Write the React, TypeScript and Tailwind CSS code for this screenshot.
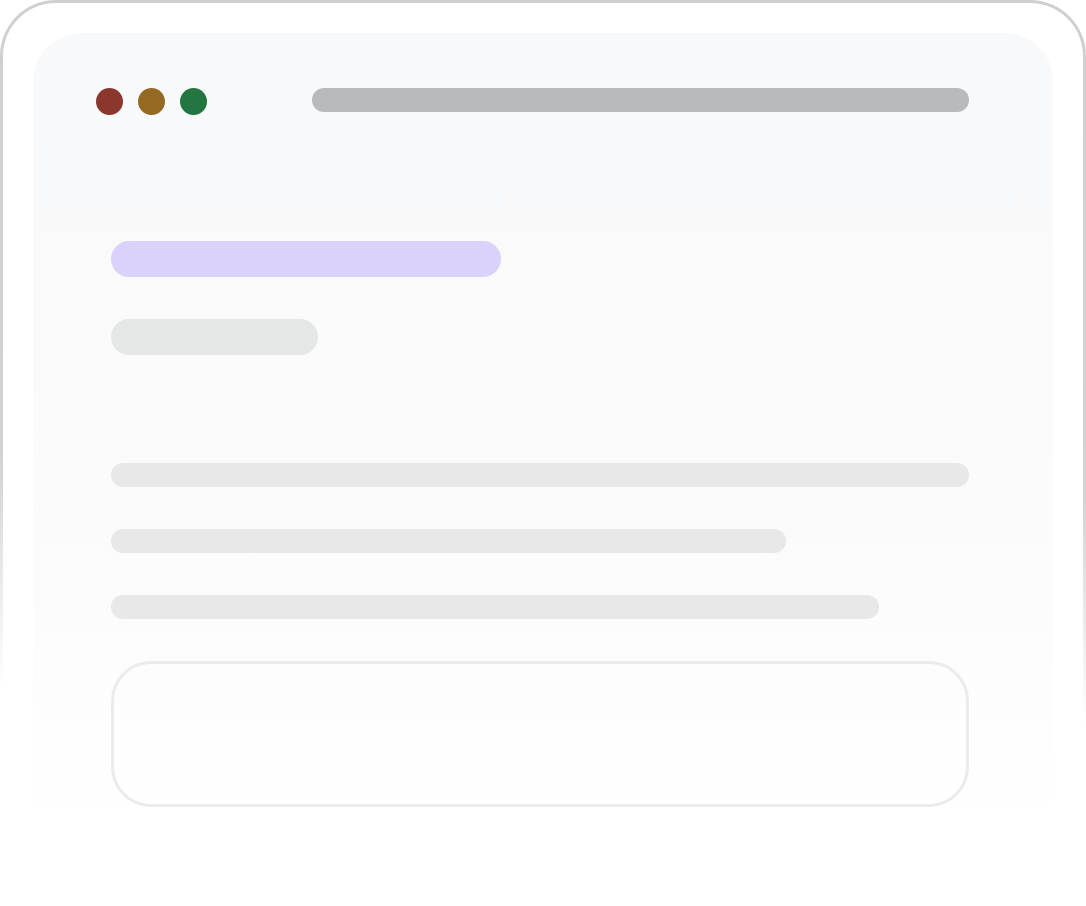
export default function App() {
  return (
    <div className="h-[906px] w-[1086px] overflow-hidden bg-white">
      {/* device frame: gradient border fading out toward the bottom */}
      <div className="h-[1000px] rounded-[56px] bg-[linear-gradient(182deg,#cfcfcf_0%,#d3d3d3_48%,rgba(235,235,235,0)_70%)] p-[3px]">
        <div className="h-full rounded-[53px] bg-white p-[30px]">
          <div className="h-full rounded-[48px] bg-[linear-gradient(to_bottom,#f8f9fa_0%,#fbfbfc_55%,#ffffff_85%)] pt-[55px]">
            {/* window chrome */}
            <div className="flex items-center pl-[63px] pr-[84px]">
              <div className="flex gap-[15px]">
                <span className="h-[27px] w-[27px] rounded-full bg-[#8b372d]" />
                <span className="h-[27px] w-[27px] rounded-full bg-[#956823]" />
                <span className="h-[27px] w-[27px] rounded-full bg-[#237640]" />
              </div>
              <div className="mb-[3px] ml-[105px] h-6 flex-1 rounded-full bg-[#b9babc]" />
            </div>

            {/* skeleton content */}
            <div className="mt-[126px] pl-[78px] pr-[84px]">
              <div className="h-9 w-[390px] rounded-full bg-[#dad2fa]" />
              <div className="mt-[42px] h-9 w-[207px] rounded-full bg-[#e5e6e6]" />

              <div className="mt-[108px] flex flex-col gap-[42px]">
                <div className="h-6 w-full rounded-full bg-[#e8e8e8]" />
                <div className="h-6 w-[675px] rounded-full bg-[#e8e8e8]" />
                <div className="h-6 w-[768px] rounded-full bg-[#e8e8e8]" />
              </div>

              <div className="mt-[42px] h-[146px] rounded-[40px] border-[3px] border-[#ebebeb]" />
            </div>
          </div>
        </div>
      </div>
    </div>
  );
}
